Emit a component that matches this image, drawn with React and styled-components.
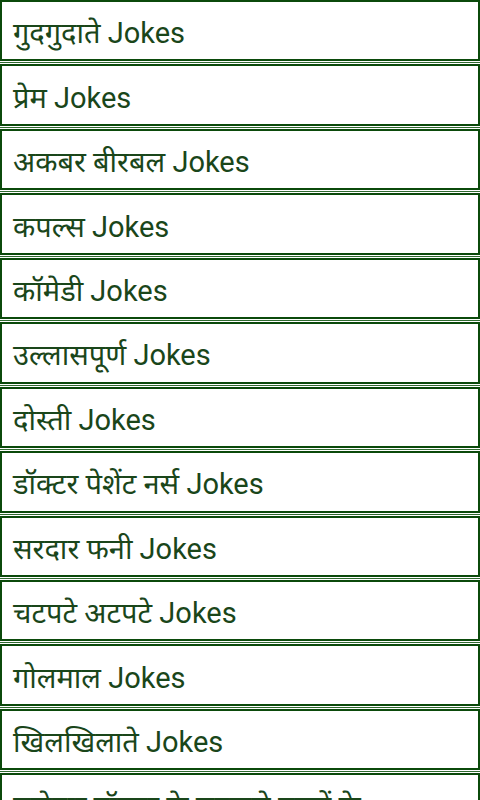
import React from "react";
import styled, { createGlobalStyle } from "styled-components";

const Global = createGlobalStyle`
  html, body { margin: 0; padding: 0; background: #ffffff; }
  body { font-family: Roboto, "Noto Sans Devanagari", "Noto Sans", sans-serif; }
`;

const List = styled.div`
  display: flex;
  flex-direction: column;
  width: 480px;
  height: 800px;
  overflow: hidden;
  background: #ffffff;
`;

const Row = styled.div`
  box-sizing: border-box;
  flex: 0 0 auto;
  height: 61.45px;
  border: 2px solid #0b4a0b;
  display: flex;
  align-items: center;
  padding: 6px 0 0 11px;
  font-size: 29px;
  line-height: 1;
  color: #1a461a;
  white-space: nowrap;
  overflow: hidden;
`;

const Separator = styled.div`
  flex: 0 0 auto;
  height: 1px;
  margin: 1px 0;
  background: #2f6a2f;
`;

const items = [
  "गुदगुदाते Jokes",
  "प्रेम Jokes",
  "अकबर बीरबल Jokes",
  "कपल्स Jokes",
  "कॉमेडी Jokes",
  "उल्लासपूर्ण Jokes",
  "दोस्ती Jokes",
  "डॉक्टर पेशेंट नर्स Jokes",
  "सरदार फनी Jokes",
  "चटपटे अटपटे Jokes",
  "गोलमाल Jokes",
  "खिलखिलाते Jokes",
  "मजेदार डॉक्टर के चुटकुले बच्चों के",
];

export default function App() {
  return (
    <>
      <Global />
      <List>
        {items.map((t, i) => (
          <React.Fragment key={i}>
            {i > 0 && <Separator />}
            <Row>{t}</Row>
          </React.Fragment>
        ))}
      </List>
    </>
  );
}
